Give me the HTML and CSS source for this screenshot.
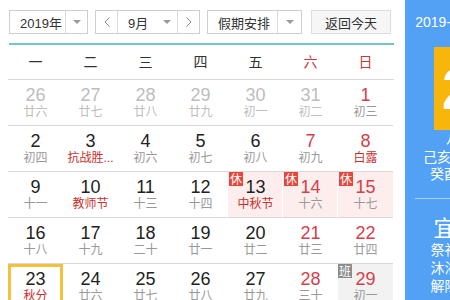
FILE: index.html
```html
<!doctype html>
<html lang="zh-CN">
	<head>
		<meta charset="utf-8" />
		<title>万年历</title>
		<link rel="stylesheet" href="styles.css">
	</head>

	<body>
		<div class="page">
			<!-- Calendar -->
			<div class="calendar">
				<div class="toolbar">
					<div class="select">
						<span class="select-text year-text">2019年</span>
						<span class="select-arrow"><i class="caret"></i></span>
					</div>

					<div class="select">
						<span class="select-btn">
							<svg width="6" height="10" viewBox="0 0 6 10"><polyline points="5.5,0.5 1,5 5.5,9.5" fill="none" stroke="#888" stroke-width="1"/></svg>
						</span>
						<span class="select-text month-text">9月<i class="caret"></i></span>
						<span class="select-btn">
							<svg width="6" height="10" viewBox="0 0 6 10"><polyline points="0.5,0.5 5,5 0.5,9.5" fill="none" stroke="#888" stroke-width="1"/></svg>
						</span>
					</div>

					<div class="select">
						<span class="select-text holiday-text">假期安排</span>
						<span class="select-arrow holiday-arrow"><i class="caret"></i></span>
					</div>

					<button class="today">返回今天</button>
				</div>

				<div class="weekdays">
					<span>一</span><span>二</span><span>三</span><span>四</span><span>五</span>
					<span class="weekend">六</span><span class="weekend">日</span>
				</div>

				<div class="grid">
					<!-- row 1 -->
					<div class="cell other"><b>26</b><em>廿六</em></div>
					<div class="cell other"><b>27</b><em>廿七</em></div>
					<div class="cell other"><b>28</b><em>廿八</em></div>
					<div class="cell other"><b>29</b><em>廿九</em></div>
					<div class="cell other"><b>30</b><em>初一</em></div>
					<div class="cell other"><b>31</b><em>初二</em></div>
					<div class="cell weekend"><b>1</b><em>初三</em></div>

					<!-- row 2 -->
					<div class="cell"><b>2</b><em>初四</em></div>
					<div class="cell"><b>3</b><em class="festival">抗战胜...</em></div>
					<div class="cell"><b>4</b><em>初六</em></div>
					<div class="cell"><b>5</b><em>初七</em></div>
					<div class="cell"><b>6</b><em>初八</em></div>
					<div class="cell weekend"><b>7</b><em>初九</em></div>
					<div class="cell weekend"><b>8</b><em class="festival">白露</em></div>

					<!-- row 3 -->
					<div class="cell"><b>9</b><em>十一</em></div>
					<div class="cell"><b>10</b><em class="festival">教师节</em></div>
					<div class="cell"><b>11</b><em>十三</em></div>
					<div class="cell"><b>12</b><em>十四</em></div>
					<div class="cell rest"><span class="badge">休</span><b>13</b><em class="festival">中秋节</em></div>
					<div class="cell rest weekend"><span class="badge">休</span><b>14</b><em>十六</em></div>
					<div class="cell rest weekend"><span class="badge">休</span><b>15</b><em>十七</em></div>

					<!-- row 4 -->
					<div class="cell"><b>16</b><em>十八</em></div>
					<div class="cell"><b>17</b><em>十九</em></div>
					<div class="cell"><b>18</b><em>二十</em></div>
					<div class="cell"><b>19</b><em>廿一</em></div>
					<div class="cell"><b>20</b><em>廿二</em></div>
					<div class="cell weekend"><b>21</b><em>廿三</em></div>
					<div class="cell weekend"><b>22</b><em>廿四</em></div>

					<!-- row 5 -->
					<div class="cell selected"><b>23</b><em class="festival">秋分</em></div>
					<div class="cell"><b>24</b><em>廿六</em></div>
					<div class="cell"><b>25</b><em>廿七</em></div>
					<div class="cell"><b>26</b><em>廿八</em></div>
					<div class="cell"><b>27</b><em>廿九</em></div>
					<div class="cell weekend"><b>28</b><em>三十</em></div>
					<div class="cell work weekend"><span class="badge">班</span><b>29</b><em>初一</em></div>
				</div>
			</div>

			<!-- Day detail -->
			<aside class="panel">
				<div class="panel-date">2019-09-23 星期一</div>
				<div class="panel-day">23</div>
				<div class="panel-lunar">八月廿五</div>
				<div class="panel-line">己亥年 【猪年】</div>
				<div class="panel-line">癸酉月 丁亥日</div>
				<hr class="panel-rule" />
				<div class="panel-cols">
					<div class="panel-col good">
						<h3>宜</h3>
						<p>祭祀</p>
						<p>沐浴</p>
						<p>解除</p>
					</div>
					<div class="panel-col">
						<h3>忌</h3>
						<p>嫁娶</p>
						<p>动土</p>
						<p>安葬</p>
					</div>
				</div>
			</aside>
		</div>
	</body>
</html>
```

FILE: styles.css
```css
body {
	margin: 0;
	overflow: hidden;
	background: #fff;
	color: #333;
	font-family: "Liberation Sans", Arial, "Noto Sans CJK SC", sans-serif;
}

.page {
	display: flex;
	align-items: flex-start;
	width: 543px;
}

.calendar {
	width: 386px;
	padding-left: 8px;
	flex-shrink: 0;
}

/* toolbar */
.toolbar {
	display: flex;
	gap: 7px;
	margin-left: 1px;
	padding: 10px 0 9px;
	border-bottom: 2px solid #74c4cc;
	font-size: 13px;
}

.select {
	display: flex;
	height: 24px;
	box-sizing: border-box;
	border: 1px solid #cfcfcf;
	background: #fff;
}

.select-text {
	display: flex;
	align-items: center;
	padding-left: 10px;
	box-sizing: border-box;
}

.year-text {
	width: 55px;
}

.month-text {
	width: 61px;
	border-left: 1px solid #dcdcdc;
	border-right: 1px solid #dcdcdc;
}

.month-text .caret {
	margin-left: 15px;
}

.holiday-text {
	width: 69px;
}

.select-arrow {
	display: flex;
	align-items: center;
	justify-content: center;
	width: 21px;
	border-left: 1px solid #dcdcdc;
}

.holiday-arrow {
	width: 23px;
}

.select-btn {
	display: flex;
	align-items: center;
	justify-content: center;
	width: 21px;
}

.caret {
	display: inline-block;
	width: 0;
	height: 0;
	border-left: 4px solid transparent;
	border-right: 4px solid transparent;
	border-top: 4px solid #9a9a9a;
}

.today {
	width: 80px;
	height: 24px;
	margin-left: 2px;
	padding: 0;
	border: 1px solid #dcdcdc;
	background: #f6f6f6;
	color: #333;
	font-family: inherit;
	font-size: 13px;
}

/* weekday header */
.weekdays {
	display: grid;
	grid-template-columns: repeat(7, 55px);
	height: 34px;
	line-height: 34px;
	border-bottom: 1px solid #d9d9d9;
	text-align: center;
	font-size: 14px;
	color: #333;
}

.weekdays .weekend {
	color: #c9383a;
}

/* days */
.grid {
	display: grid;
	grid-template-columns: repeat(7, 55px);
}

.cell {
	position: relative;
	height: 45px;
	border-bottom: 1px solid #d9d9d9;
	text-align: center;
}

.cell b {
	display: block;
	padding-top: 5px;
	font-size: 18px;
	font-weight: normal;
	line-height: 20px;
	color: #222;
}

.cell em {
	display: block;
	font-size: 12px;
	font-style: normal;
	line-height: 14px;
	color: #999;
	white-space: nowrap;
}

.cell.weekend b {
	color: #d6404a;
}

.cell em.festival {
	color: #c9302c;
}

.cell.other b,
.cell.other em {
	color: #bdbdbd;
}

.cell.rest {
	background: #fdeded;
	border-left: 1px solid #fff;
	margin-left: -1px;
}

.cell.work {
	background: #f2f2f2;
}

.cell.selected {
	box-shadow: inset 0 0 0 3px #f2c23c;
}

.badge {
	position: absolute;
	top: 0;
	left: 0;
	width: 14px;
	height: 14px;
	font-size: 12px;
	line-height: 14px;
	color: #fff;
	background: #e5483b;
	font-family: "Noto Sans CJK SC", sans-serif;
}

.cell.rest .badge {
	left: 1px;
}

.cell.work .badge {
	background: #8c8c8c;
}

/* right panel */
.panel {
	width: 138px;
	min-height: 300px;
	margin-left: 11px;
	padding-top: 14px;
	flex-shrink: 0;
	background: #52a1f5;
	color: #fff;
	text-align: center;
	font-size: 14px;
}

.panel-date {
	line-height: 16px;
}

.panel-day {
	width: 81px;
	height: 83px;
	margin: 17px auto 0;
	background: #f7b60b;
	font-size: 58px;
	font-weight: bold;
	line-height: 83px;
}

.panel-lunar {
	margin-top: 1px;
	line-height: 14px;
}

.panel-line {
	line-height: 17px;
}

.panel-lunar + .panel-line {
	margin-top: 4px;
}

.panel-rule {
	margin: 15px 10px 0;
	border: 0;
	border-top: 1px solid rgba(255, 255, 255, 0.5);
}

.panel-cols {
	display: flex;
}

.panel-col {
	width: 69px;
	box-sizing: border-box;
}

.panel-col.good {
	padding-left: 10px;
}

.panel-col h3 {
	margin: 18px 0 0;
	font-size: 22px;
	font-weight: normal;
	line-height: 24px;
}

.panel-col p {
	margin: 0;
	line-height: 18px;
}
```
